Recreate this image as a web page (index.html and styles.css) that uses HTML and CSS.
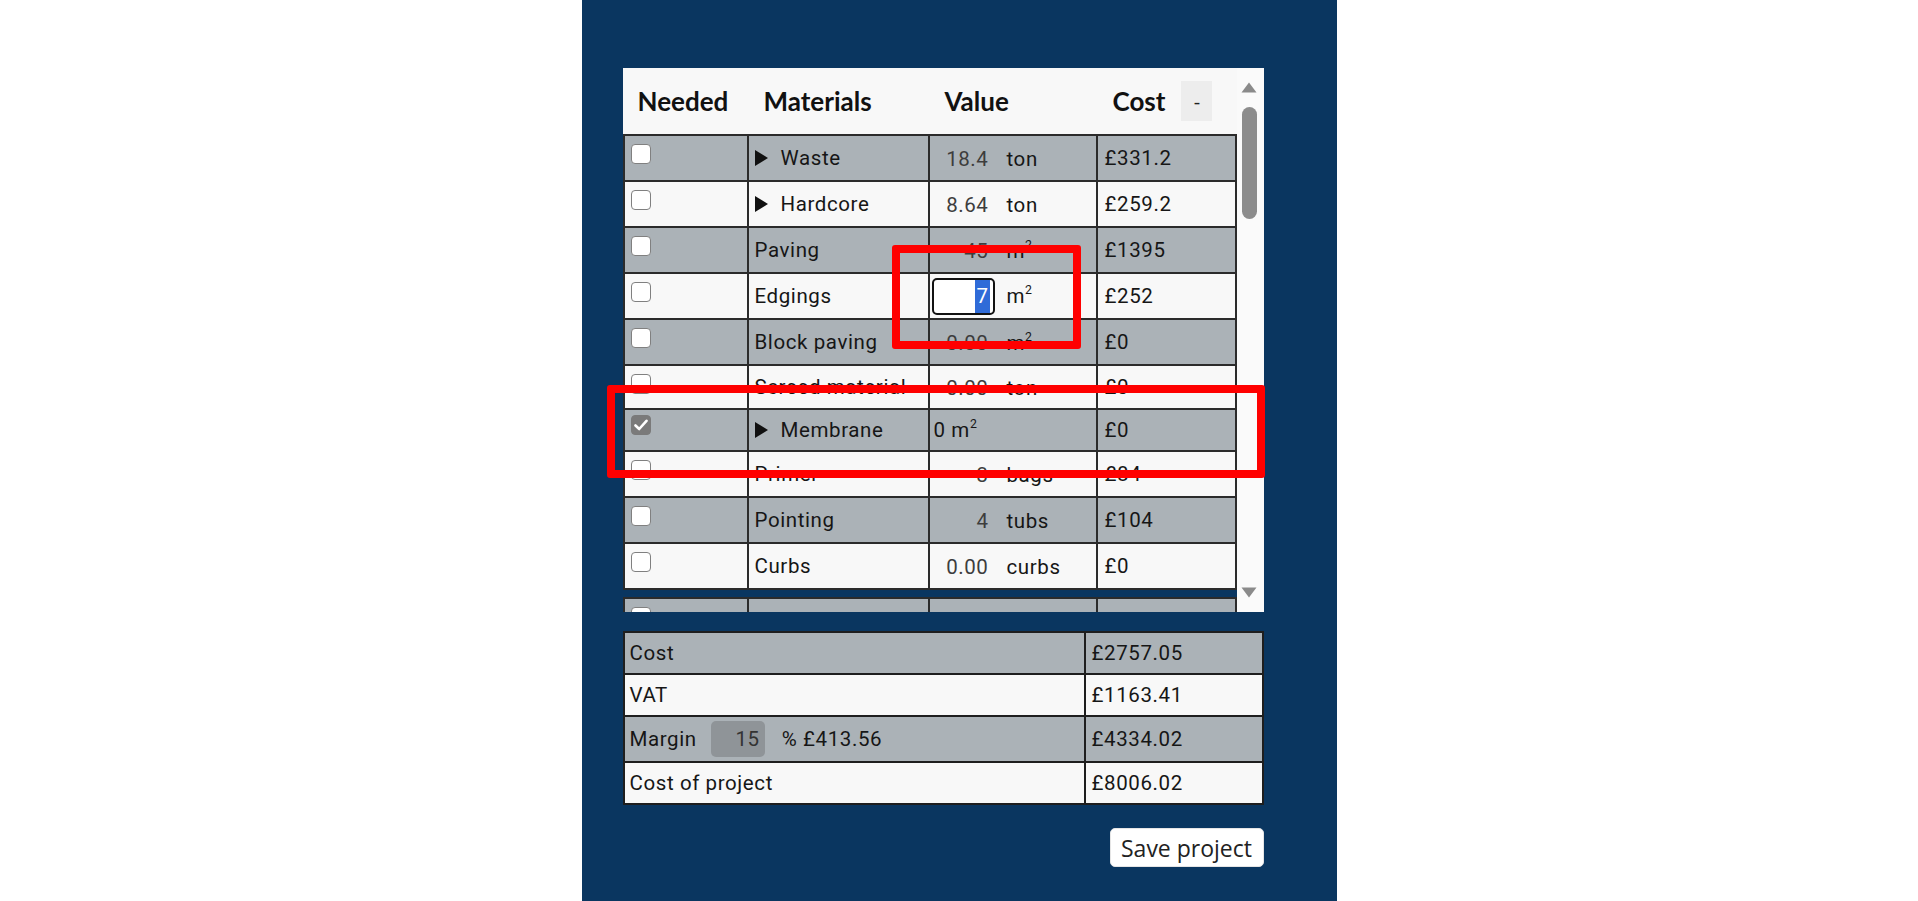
FILE: index.html
```html
<!DOCTYPE html>
<html lang="en">
<head>
<meta charset="utf-8">
<title>Materials</title>
<link rel="stylesheet" href="styles.css">
</head>
<body>
<div class="panel">
  <div class="scroll">
    <div class="viewport">
      <div class="thead">
        <div class="th">Needed</div>
        <div class="th">Materials</div>
        <div class="th">Value</div>
        <div class="th th-cost"><span>Cost</span><button class="collapse">-</button></div>
      </div>
      <table class="mat">
        <colgroup><col class="c1"><col class="c2"><col class="c3"><col class="c4"></colgroup>
        <tr class="odd">
          <td class="chk"><span class="box"></span></td>
          <td><span class="tri"><svg width="13" height="16" viewBox="0 0 13 16"><path d="M0 0 L13 8 L0 16 Z" fill="#111"/></svg></span>Waste</td>
          <td class="val"><span class="num">18.4</span><span class="unit">ton</span></td>
          <td class="cost">£331.2</td>
        </tr>
        <tr>
          <td class="chk"><span class="box"></span></td>
          <td><span class="tri"><svg width="13" height="16" viewBox="0 0 13 16"><path d="M0 0 L13 8 L0 16 Z" fill="#111"/></svg></span>Hardcore</td>
          <td class="val"><span class="num">8.64</span><span class="unit">ton</span></td>
          <td class="cost">£259.2</td>
        </tr>
        <tr class="odd">
          <td class="chk"><span class="box"></span></td>
          <td>Paving</td>
          <td class="val"><span class="num">45</span><span class="unit">m<sup>2</sup></span></td>
          <td class="cost">£1395</td>
        </tr>
        <tr>
          <td class="chk"><span class="box"></span></td>
          <td>Edgings</td>
          <td class="val"><span class="num focus"><span class="sel">7</span></span><span class="unit">m<sup>2</sup></span></td>
          <td class="cost">£252</td>
        </tr>
        <tr class="odd">
          <td class="chk"><span class="box"></span></td>
          <td>Block paving</td>
          <td class="val"><span class="num">0.00</span><span class="unit">m<sup>2</sup></span></td>
          <td class="cost">£0</td>
        </tr>
        <tr class="mid">
          <td class="chk"><span class="box"></span></td>
          <td>Screed material</td>
          <td class="val"><span class="num">0.00</span><span class="unit">ton</span></td>
          <td class="cost">£0</td>
        </tr>
        <tr class="odd short">
          <td class="chk"><span class="box checked"><svg width="14" height="12" viewBox="0 0 14 12"><path d="M1.5 6.5 L5.2 10 L12.5 1.8" fill="none" stroke="#fff" stroke-width="2.6" stroke-linecap="round" stroke-linejoin="round"/></svg></span></td>
          <td><span class="tri"><svg width="13" height="16" viewBox="0 0 13 16"><path d="M0 0 L13 8 L0 16 Z" fill="#111"/></svg></span>Membrane</td>
          <td class="val plain">0 m<sup>2</sup></td>
          <td class="cost">£0</td>
        </tr>
        <tr>
          <td class="chk"><span class="box"></span></td>
          <td>Primer</td>
          <td class="val"><span class="num">3</span><span class="unit">bags</span></td>
          <td class="cost">£84</td>
        </tr>
        <tr class="odd">
          <td class="chk"><span class="box"></span></td>
          <td>Pointing</td>
          <td class="val"><span class="num">4</span><span class="unit">tubs</span></td>
          <td class="cost">£104</td>
        </tr>
        <tr>
          <td class="chk"><span class="box"></span></td>
          <td>Curbs</td>
          <td class="val"><span class="num">0.00</span><span class="unit">curbs</span></td>
          <td class="cost">£0</td>
        </tr>
      </table>
      <table class="mat mat-next">
        <colgroup><col class="c1"><col class="c2"><col class="c3"><col class="c4"></colgroup>
        <tr class="odd">
          <td class="chk"><span class="box"></span></td>
          <td class="top">Basic material</td>
          <td class="val top"><span class="num">7.47</span><span class="unit">m<sup>2</sup></span></td>
          <td class="cost top">£112.05</td>
        </tr>
      </table>
    </div>
    <div class="scrollbar">
      <svg class="arrow" width="16" height="11" viewBox="0 0 16 11"><path d="M8 0.5 L15.5 10.5 L0.5 10.5 Z" fill="#8a8a8a"/></svg>
      <div class="track"><div class="thumb"></div></div>
      <svg class="arrow" width="16" height="11" viewBox="0 0 16 11"><path d="M0.5 0.5 L15.5 0.5 L8 10.5 Z" fill="#8a8a8a"/></svg>
    </div>
  </div>

  <table class="summary">
    <colgroup><col class="s1"><col class="s2"></colgroup>
    <tr class="odd"><td>Cost</td><td class="sv">£2757.05</td></tr>
    <tr><td>VAT</td><td class="sv">£1163.41</td></tr>
    <tr class="odd tall"><td><span class="mlabel">Margin</span><span class="minput">15</span><span class="mpct">% £413.56</span></td><td class="sv">£4334.02</td></tr>
    <tr><td>Cost of project</td><td class="sv">£8006.02</td></tr>
  </table>

  <div class="actions"><button class="save">Save project</button></div>

  <div class="mark mark-a"></div>
  <div class="mark mark-b"></div>
</div>
</body>
</html>
```

FILE: styles.css
```css
html, body {
  margin: 0;
  padding: 0;
  background: #ffffff;
}

body {
  font-family: Roboto, "Liberation Sans", sans-serif;
  color: #161616;
}

.panel {
  position: relative;
  box-sizing: border-box;
  width: 755px;
  min-height: 901px;
  margin: 0 auto;
  padding: 68px 73px 0 41px;
  background: #0a3660;
}

/* scroll area */
.scroll {
  display: flex;
  height: 544px;
}

.viewport {
  width: 614px;
  height: 544px;
  overflow: hidden;
}

.thead {
  display: grid;
  grid-template-columns: 126px 181px 168px 139px;
  align-items: center;
  height: 66px;
  background: #f8f8f8;
  font-family: Lato, "Open Sans", sans-serif;
  font-weight: 700;
  font-size: 26px;
  color: #111;
}

.th {
  padding-left: 15px;
}

.th-cost {
  display: flex;
  align-items: center;
}

.collapse {
  width: 31px;
  height: 40px;
  margin-left: 16px;
  padding: 0;
  border: none;
  background: #ededed;
  font-family: "Open Sans", sans-serif;
  font-size: 20px;
  color: #222;
}

.mat {
  width: 614px;
  table-layout: fixed;
  border-collapse: separate;
  border-spacing: 0;
  border-left: 2px solid #2b2b2b;
  border-top: 2px solid #2b2b2b;
  font-size: 20.5px;
  letter-spacing: 0.6px;
}

.mat-next {
  margin-top: 7px;
}

.c1 { width: 124px; }
.c2 { width: 181px; }
.c3 { width: 168px; }
.c4 { width: 139px; }

.mat tr {
  height: 46px;
  background: #f8f8f8;
}

.mat tr.odd {
  background: #abb2b7;
}

.mat tr.mid {
  height: 44px;
}

.mat tr.short {
  height: 42px;
}

.mat td {
  box-sizing: border-box;
  padding: 0 6px;
  border-right: 2px solid #2b2b2b;
  border-bottom: 2px solid #2b2b2b;
  vertical-align: middle;
  white-space: nowrap;
  overflow: hidden;
}

.mat td.top {
  vertical-align: top;
  padding-top: 10px;
}

.mat td.chk {
  vertical-align: top;
  padding: 8px 0 0 6px;
}

.mat tr.short td.chk {
  padding-top: 5px;
}

.box {
  display: flex;
  align-items: center;
  justify-content: center;
  box-sizing: border-box;
  width: 20px;
  height: 20px;
  border: 1.5px solid #808080;
  border-radius: 4px;
  background: #ffffff;
}

.box.checked {
  background: #7a7a7a;
  border-color: #7a7a7a;
}

.tri {
  display: inline-block;
  margin-right: 13px;
  vertical-align: -1px;
}

.tri svg {
  display: block;
}

.mat td.val {
  padding-left: 2px;
}

.mat td.val.plain {
  padding-left: 4px;
}

.num {
  display: inline-block;
  box-sizing: border-box;
  width: 63px;
  padding-right: 6px;
  text-align: right;
  color: #3d3d3d;
  vertical-align: middle;
}

.num.focus {
  height: 37px;
  padding-right: 3px;
  border: 2px solid #121212;
  border-radius: 5px;
  background: #fff;
  line-height: 33px;
}

.sel {
  display: inline-block;
  padding: 0 1px;
  background: #2f6bd8;
  color: #fff;
}

.unit {
  display: inline-block;
  margin-left: 12px;
  vertical-align: middle;
}

sup {
  font-size: 0.6em;
  line-height: 0;
  vertical-align: 0.7em;
}

.mat td.cost {
  padding-left: 7px;
}

/* scrollbar */
.scrollbar {
  display: flex;
  flex-direction: column;
  align-items: center;
  width: 27px;
  padding: 14px 2px 14px 0;
  box-sizing: border-box;
  background: #fafafa;
}

.arrow {
  display: block;
  flex: none;
}

.track {
  flex: 1;
  width: 15px;
  padding-top: 14px;
}

.thumb {
  width: 15px;
  height: 112px;
  border-radius: 8px;
  background: #8c8c8c;
}

/* summary */
.summary {
  width: 641px;
  margin-top: 19px;
  table-layout: fixed;
  border-collapse: separate;
  border-spacing: 0;
  border-left: 2px solid #1e1e1e;
  border-top: 2px solid #1e1e1e;
  font-size: 20.5px;
  letter-spacing: 0.6px;
}

.s1 { width: 461px; }
.s2 { width: 178px; }

.summary tr {
  height: 42px;
  background: #f8f8f8;
}

.summary tr.odd {
  background: #abb2b7;
}

.summary tr.tall {
  height: 46px;
}

.summary td {
  box-sizing: border-box;
  padding: 0 5px;
  border-right: 2px solid #1e1e1e;
  border-bottom: 2px solid #1e1e1e;
  vertical-align: middle;
  white-space: nowrap;
}

.summary td.sv {
  padding-left: 6px;
}

.mlabel {
  display: inline-block;
  vertical-align: middle;
}

.minput {
  display: inline-block;
  box-sizing: border-box;
  width: 54px;
  height: 36px;
  margin-left: 14px;
  padding-right: 5px;
  border-radius: 5px;
  background: #8f9498;
  color: #333;
  text-align: right;
  line-height: 36px;
  vertical-align: middle;
}

.mpct {
  display: inline-block;
  margin-left: 17px;
  vertical-align: middle;
}

.actions {
  display: flex;
  justify-content: flex-end;
  margin-top: 23px;
}

.save {
  width: 154px;
  height: 39px;
  padding: 0;
  border: 1px solid #e5e5e5;
  border-radius: 5px;
  background: #ffffff;
  font-family: "Open Sans", sans-serif;
  font-size: 23px;
  color: #222;
}

/* annotation marks */
.mark {
  position: absolute;
  box-sizing: border-box;
  border: 8px solid #ff0000;
  border-radius: 3px;
}

.mark-a {
  left: 310px;
  top: 245px;
  width: 189px;
  height: 104px;
}

.mark-b {
  left: 25px;
  top: 385px;
  width: 658px;
  height: 93px;
}
```
